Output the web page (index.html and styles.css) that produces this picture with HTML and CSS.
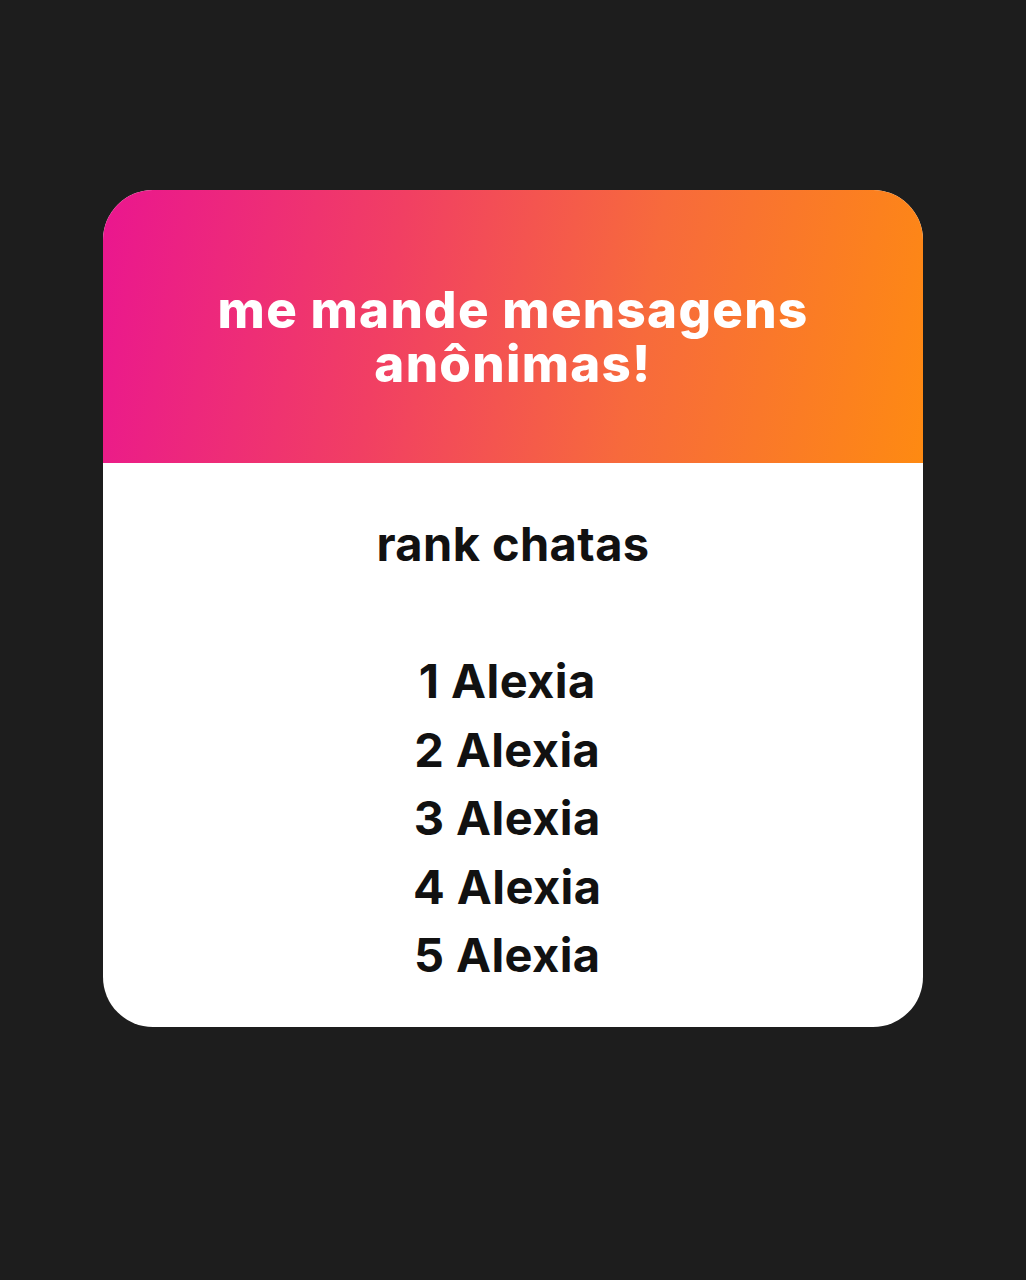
FILE: index.html
```html
<!DOCTYPE html>
<html lang="pt">
<head>
<meta charset="utf-8">
<link rel="stylesheet" href="styles.css">
</head>
<body>
<main class="page">
  <section class="card">
    <header class="card-head">
      <h1 class="title">me mande mensagens<br>anônimas!</h1>
    </header>
    <div class="card-body">
      <p class="answer">rank chatas<br><br>1 Alexia&nbsp;<br>2 Alexia&nbsp;<br>3 Alexia&nbsp;<br>4 Alexia&nbsp;<br>5 Alexia&nbsp;</p>
    </div>
  </section>
</main>
</body>
</html>
```
FILE: styles.css
```css
html, body {
  margin: 0;
  padding: 0;
  background: #1d1d1d;
}
.page {
  width: 1026px;
  height: 1280px;
  padding-top: 190px;
  box-sizing: border-box;
}
.card {
  width: 820px;
  margin-left: 103px;
  border-radius: 50px;
  overflow: hidden;
  background: #ffffff;
}
.card-head {
  height: 273px;
  box-sizing: border-box;
  padding-top: 20px;
  display: flex;
  align-items: center;
  justify-content: center;
  background: linear-gradient(100deg, #ea168f 0%, #f13f63 35%, #f76a3c 65%, #fe8a12 100%);
}
.title {
  margin: 0;
  color: #ffffff;
  font-family: Inter, "Noto Sans", sans-serif;
  font-weight: 800;
  font-size: 51px;
  line-height: 54px;
  letter-spacing: 1.3px;
  text-align: center;
}
.card-body {
  height: 564px;
  box-sizing: border-box;
  padding-top: 47px;
}
.answer {
  margin: 0;
  color: #111111;
  font-family: Inter, "Noto Sans", sans-serif;
  font-weight: 700;
  font-size: 47px;
  line-height: 68.5px;
  letter-spacing: 0.4px;
  text-align: center;
}
```
